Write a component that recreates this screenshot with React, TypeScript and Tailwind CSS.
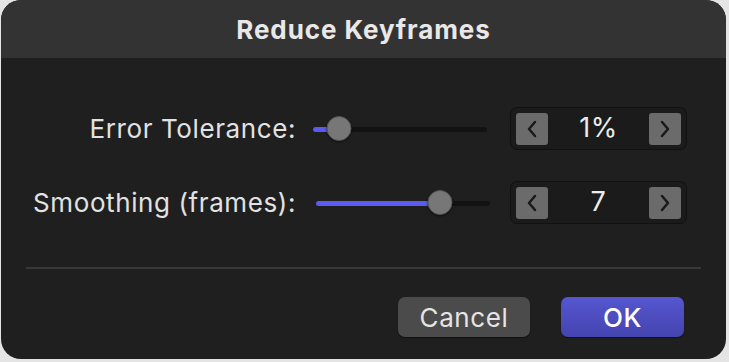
import type { ReactNode } from "react"

const font = { fontFamily: "Inter, 'Noto Sans', sans-serif" }

function Chevron({ dir }: { dir: "left" | "right" }) {
  return (
    <svg width="14" height="20" viewBox="0 0 14 20" fill="none">
      <polyline
        points={dir === "left" ? "10,3 4,10 10,17" : "4,3 10,10 4,17"}
        stroke="#1a1a1a"
        strokeWidth="2.5"
        strokeLinecap="round"
        strokeLinejoin="round"
      />
    </svg>
  )
}

function Slider({ value }: { value: number }) {
  // value: 0..1
  return (
    <div className="relative h-[26px] w-[174px]">
      <div className="absolute left-0 right-0 top-[11px] h-[5px] rounded-full bg-[#121212]" />
      <div
        className="absolute left-0 top-[11px] h-[5px] rounded-full bg-[#5b5bf2]"
        style={{ width: `${value * 100}%` }}
      />
      <div
        className="absolute top-0 h-[25px] w-[25px] -translate-x-1/2 rounded-full border border-[#555] bg-[#777] shadow-[0_1px_2px_rgba(0,0,0,0.6)]"
        style={{ left: `${value * 100}%` }}
      />
    </div>
  )
}

function Stepper({ children }: { children: ReactNode }) {
  return (
    <div className="flex h-[43px] w-[177px] items-center justify-between rounded-[7px] border border-[#111] bg-[#1b1b1b] px-[5px]">
      <div className="flex h-[32px] w-[32px] items-center justify-center rounded-[3px] bg-[#6b6b6b]">
        <Chevron dir="left" />
      </div>
      <span className="text-[27px] tracking-[0.5px] text-[#ececec]">{children}</span>
      <div className="flex h-[32px] w-[32px] items-center justify-center rounded-[3px] bg-[#6b6b6b]">
        <Chevron dir="right" />
      </div>
    </div>
  )
}

function Row({ label, value, pos, shift }: { label: string; value: string; pos: number; shift: string }) {
  return (
    <div className="flex h-[43px] items-center">
      <div className="w-[295px] whitespace-nowrap text-right text-[26px] tracking-[0.6px] text-[#e2e2e2]">{label}</div>
      <div className={shift}>
        <Slider value={pos} />
      </div>
      <div className="ml-auto mr-[39px]">
        <Stepper>{value}</Stepper>
      </div>
    </div>
  )
}

export default function App() {
  return (
    <div className="h-[362px] w-[729px] bg-[#e4e4e4] pl-[1px]" style={font}>
      <div className="flex h-[359px] w-[725px] flex-col overflow-hidden rounded-[20px] bg-[#1f1f1f]">
        <div className="flex h-[58px] shrink-0 items-center justify-center bg-[#333333]">
          <h1 className="text-[26px] font-bold tracking-[0.9px] text-[#e8e8e8]">Reduce Keyframes</h1>
        </div>

        <div className="flex flex-col gap-[31px] pt-[49px]">
          <Row label="Error Tolerance:" value="1%" pos={0.15} shift="ml-[17px]" />
          <Row label="Smoothing (frames):" value="7" pos={0.71} shift="ml-[20px]" />
        </div>

        <div className="mx-[25px] mt-[43px] h-[2px] bg-[#383838]" />

        <div className="flex justify-end gap-[31px] pr-[42px] pt-[28px]">
          <button className="h-[40px] w-[132px] rounded-[7px] bg-[#4b4b4b] text-[26px] tracking-[0.6px] text-[#e4e4e4] shadow-[0_1px_1px_rgba(0,0,0,0.5)]">
            Cancel
          </button>
          <button className="h-[40px] w-[123px] rounded-[7px] bg-gradient-to-b from-[#5656d0] to-[#4444b0] text-[26px] font-medium tracking-[0.6px] text-white shadow-[0_1px_1px_rgba(0,0,0,0.5)]">
            OK
          </button>
        </div>
      </div>
    </div>
  )
}
